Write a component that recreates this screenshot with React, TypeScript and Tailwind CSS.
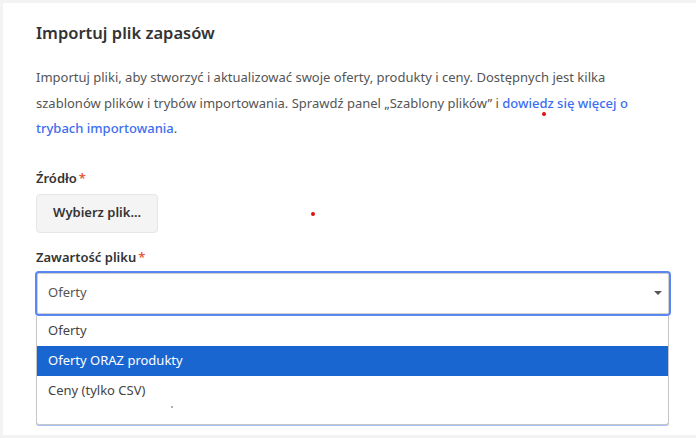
import React from "react";

export default function App() {
  return (
    <div className="w-[696px] h-[438px] bg-[#f3f3f3] overflow-hidden" style={{ fontFamily: '"Noto Sans", "Open Sans", sans-serif' }}>
      <div className="relative ml-[3px] mt-[3px] w-[693px] h-[432px] bg-white pl-[33px] pr-[26px] pt-[18px]">
        <h2 className="text-[16.5px] font-semibold text-[#333] leading-[24px]">Importuj plik zapasów</h2>
        <p className="mt-[20px] text-[13px] leading-[25.5px] text-[#555]">
          Importuj pliki, aby stworzyć i aktualizować swoje oferty, produkty i ceny. Dostępnych jest kilka szablonów plików i trybów importowania. Sprawdź panel „Szablony plików” i{" "}
          <span className="font-medium text-[#3b6ef0]">dowiedz się więcej o trybach importowania</span>.
        </p>
        <div className="mt-[26px] text-[13px] font-semibold text-[#333] leading-[20px]">
          Źródło<span className="text-[#e5583a] ml-[2px]">*</span>
        </div>
        <button className="mt-[6px] h-[39px] px-[16px] rounded-[4px] bg-[#f4f4f4] border border-[#e6e6e6] text-[13px] font-semibold text-[#333]">
          Wybierz plik...
        </button>
        <div className="mt-[14px] text-[13px] font-semibold text-[#333] leading-[20px]">
          Zawartość pliku<span className="text-[#e5583a] ml-[2px]">*</span>
        </div>
        <div className="mt-[4px] w-[636px] -ml-[1px]">
          <div className="h-[45px] rounded-[4px] border-2 border-[#5b87f2] flex items-center justify-between pl-[11px] pr-[6px] shadow-[inset_0_0_0_1px_#d0d0d0]">
            <span className="text-[13px] text-[#555]">Oferty</span>
            <svg width="10" height="6" viewBox="0 0 10 6"><path d="M1 1h8L5 5z" fill="#555" /></svg>
          </div>
          <div className="ml-[1px] w-[633px] h-[109px] border border-[#c6c6c6] border-t-0 rounded-b-[3px] bg-white text-[13px] text-[#444] shadow-[0_1px_0_#a9c1f7]">
            <div className="h-[30px] flex items-center pl-[11px]">Oferty</div>
            <div className="h-[30px] flex items-center pl-[11px] bg-[#1a66d1] text-white">Oferty ORAZ produkty</div>
            <div className="h-[30px] flex items-center pl-[11px]">Ceny (tylko CSV)</div>
          </div>
        </div>
        <span className="absolute left-[539px] top-[109px] w-[4px] h-[4px] rounded-full bg-[#e01010]" />
        <span className="absolute left-[308px] top-[209px] w-[4px] h-[4px] rounded-full bg-[#e01010]" />
        <span className="absolute left-[168px] top-[403px] w-[2px] h-[2px] rounded-full bg-[#999]" />
      </div>
    </div>
  );
}
